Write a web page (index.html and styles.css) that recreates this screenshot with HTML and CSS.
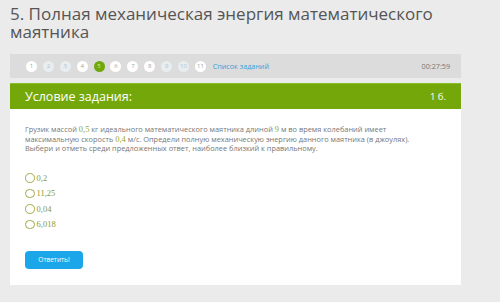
FILE: index.html
```html
<!DOCTYPE html>
<html lang="ru">
<head>
    <meta charset="UTF-8">
    <title>Полная механическая энергия математического маятника</title>
    <link rel="stylesheet" href="styles.css">
</head>
<body>
    <h1 class="title">5. Полная механическая энергия математического маятника</h1>

    <div class="nav">
        <div class="steps">
            <span class="step">1</span>
            <span class="step pale">2</span>
            <span class="step pale">3</span>
            <span class="step">4</span>
            <span class="step active">5</span>
            <span class="step">6</span>
            <span class="step">7</span>
            <span class="step">8</span>
            <span class="step pale">9</span>
            <span class="step pale">10</span>
            <span class="step">11</span>
            <a class="list-link" href="#">Список заданий</a>
        </div>
        <div class="timer">00:27:59</div>
    </div>

    <div class="task-head">
        <span>Условие задания:</span>
        <span class="points">1 б.</span>
    </div>

    <div class="task-body">
        <p class="question">
            Грузик массой <span class="num">0,5</span> кг идеального математического маятника длиной <span class="num">9</span> м во время колебаний имеет<br>
            максимальную скорость <span class="num">0,4</span> м/с. Определи полную механическую энергию данного маятника (в джоулях).<br>
            Выбери и отметь среди предложенных ответ, наиболее близкий к правильному.
        </p>

        <div class="answers">
            <label class="answer"><span class="radio"></span>0,2</label>
            <label class="answer"><span class="radio"></span>11,25</label>
            <label class="answer"><span class="radio"></span>0,04</label>
            <label class="answer"><span class="radio"></span>6,018</label>
        </div>

        <button class="submit">Ответить!</button>
    </div>
</body>
</html>
```

FILE: styles.css
```css
body {
    margin: 0;
    padding: 0 39px 0 10px;
    background-color: #ebebeb;
    font-family: "Open Sans", "Liberation Sans", sans-serif;
    color: #666;
}
.title {
    margin: 0;
    padding-top: 5px;
    height: 49px;
    font-size: 17px;
    font-weight: normal;
    line-height: 17.5px;
    color: #555;
}
.nav {
    height: 24px;
    background-color: #dcdcdc;
    display: flex;
    align-items: center;
    justify-content: space-between;
    padding: 0 11px 0 16px;
}
.steps {
    display: flex;
    align-items: center;
    gap: 5.9px;
}
.step {
    width: 11px;
    height: 11px;
    border-radius: 50%;
    background-color: #fff;
    color: #9aa5ad;
    font-size: 6px;
    display: flex;
    align-items: center;
    justify-content: center;
}
.step.pale {
    background-color: #e8edf0;
    color: #b4c4cf;
}
.step.active {
    background-color: #6ea80c;
    color: #d6ecb0;
}
.list-link {
    margin-left: 1px;
    font-size: 7.2px;
    color: #3aa0d8;
    text-decoration: none;
}
.timer {
    font-size: 7.2px;
    color: #777;
}
.task-head {
    margin-top: 5px;
    height: 25px;
    background-color: #74a80a;
    border-top: 1px solid #8cbc28;
    color: #fff;
    display: flex;
    align-items: center;
    justify-content: space-between;
    padding: 0 15px;
    font-size: 12.5px;
}
.points {
    font-size: 9.5px;
}
.task-body {
    background-color: #fff;
    height: 176px;
    padding: 16px 15px 0;
    box-sizing: border-box;
}
.question {
    margin: 0;
    font-size: 7.4px;
    line-height: 9.5px;
    color: #777;
}
.num {
    font-family: "Liberation Serif", serif;
    font-size: 8.5px;
    line-height: 1;
    color: #98a818;
}
.answers {
    margin-top: 19px;
    display: flex;
    flex-direction: column;
    gap: 5px;
}
.answer {
    display: flex;
    align-items: center;
    gap: 2px;
    height: 10.5px;
    font-family: "Liberation Serif", serif;
    font-size: 8.5px;
    color: #8a9a32;
}
.radio {
    width: 7.5px;
    height: 7.5px;
    border: 1.3px solid #a0a848;
    border-radius: 50%;
}
.submit {
    margin-top: 21px;
    width: 58px;
    height: 18px;
    border: none;
    border-radius: 4px;
    background-color: #1aa6e8;
    color: #fff;
    font-family: "Open Sans", "Liberation Sans", sans-serif;
    font-size: 6.5px;
    padding: 0;
}
```
